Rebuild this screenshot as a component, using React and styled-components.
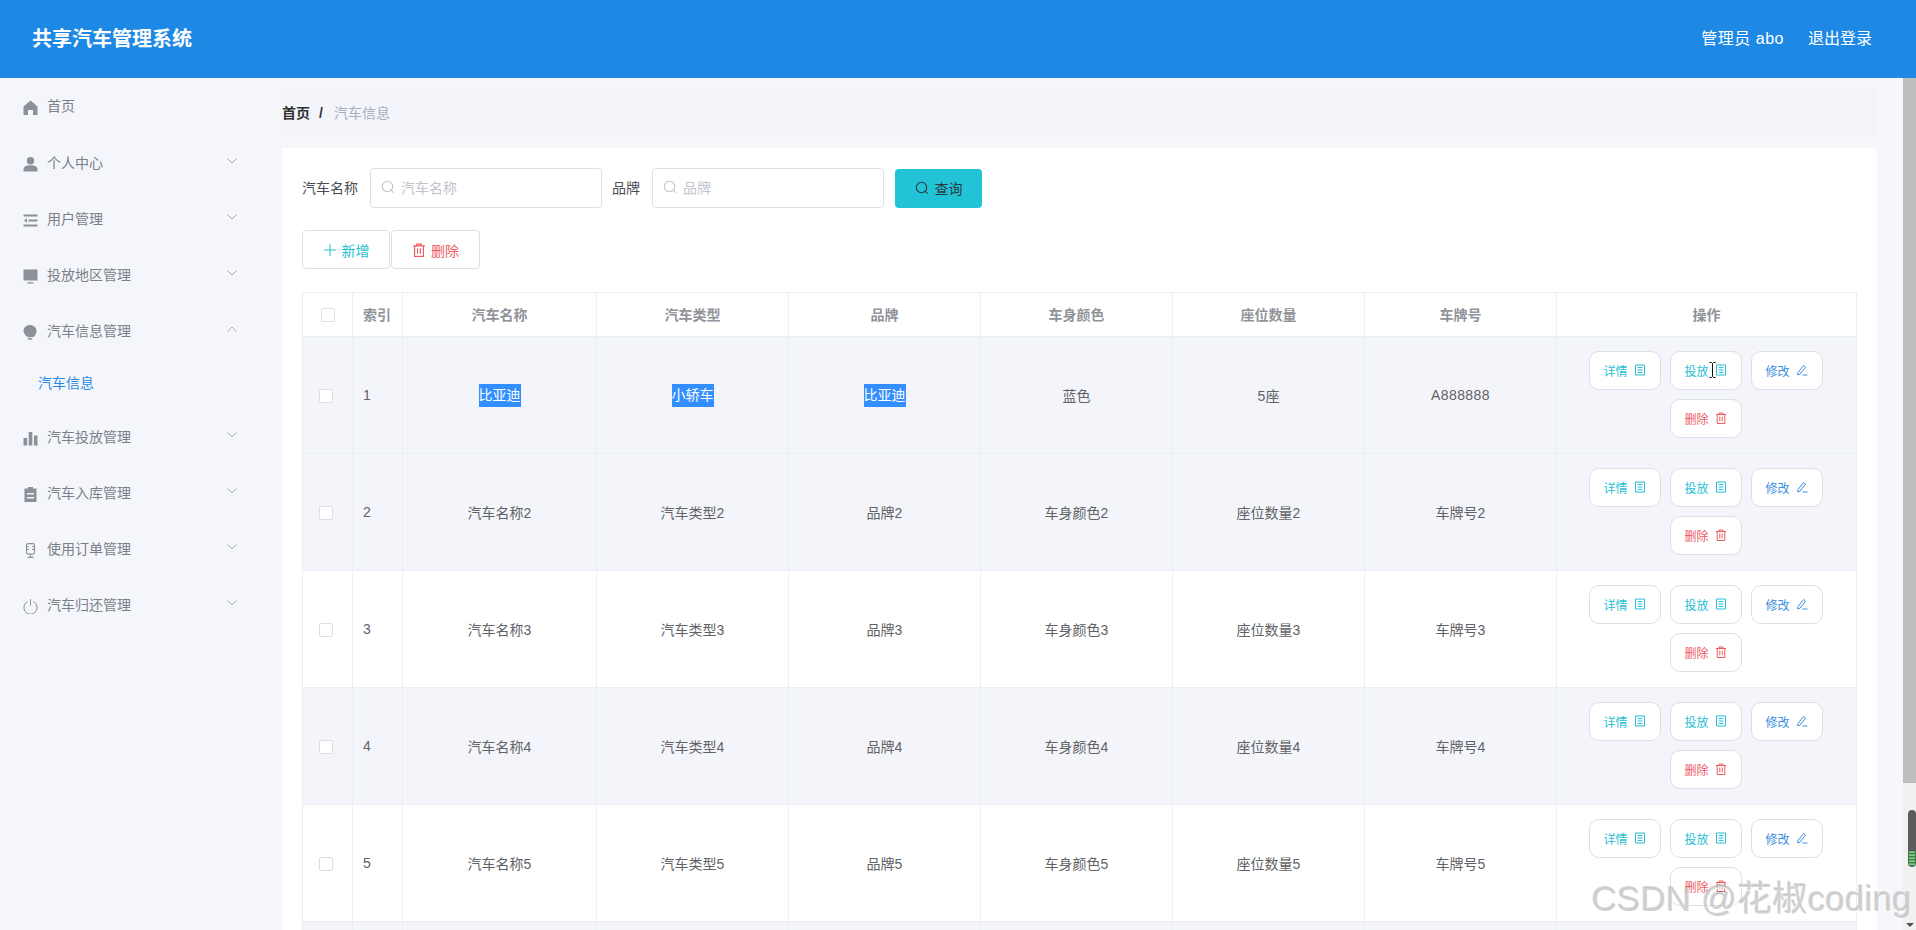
import React from "react";
import styled, { createGlobalStyle } from "styled-components";

const Global = createGlobalStyle`
  html, body { margin: 0; padding: 0; height: 100%; overflow: hidden; }
  body { font-family: "Liberation Sans", "Noto Sans CJK SC", sans-serif; font-size: 14px; color: #606266; }
  * { box-sizing: border-box; }
`;

const Page = styled.div`
  position: relative;
  width: 1916px;
  height: 930px;
  display: flex;
  flex-direction: column;
  overflow: hidden;
  background: #f5f7fb;
`;
const Header = styled.header`
  flex: none;
  height: 78px;
  background: #1e88e5;
  color: #fff;
  display: flex;
  align-items: center;
  justify-content: space-between;
  padding: 0 44px 0 32px;
`;
const Title = styled.div`
  font-size: 20px;
  font-weight: 700;
  line-height: 28px;
`;
const HeaderRight = styled.div`
  display: flex;
  gap: 24px;
  font-size: 16px;
  line-height: 24px;
`;
const AdminName = styled.span`
  letter-spacing: 0.5px;
`;
const Body = styled.div`
  flex: 1;
  min-height: 0;
  display: flex;
`;
const Sidebar = styled.nav`
  flex: none;
  width: 258px;
  background: #f4f6fb;
  color: #7a7f88;
`;
const MenuRow = styled.div`
  height: 56px;
  display: flex;
  align-items: center;
  padding: 0 21px 0 23px;
  margin-top: ${(p) => p.$gap || 0}px;
  line-height: 20px;
`;
const MenuIcon = styled.svg`
  flex: none;
  width: 15px;
  height: 15px;
  margin: 2px 9px 0 0;
  fill: #8b9099;
  stroke: none;
`;
const MenuLabel = styled.span`
  flex: 1;
`;
const Chevron = styled.svg`
  flex: none;
  width: 10px;
  height: 6px;
  margin-top: -5px;
  fill: none;
  stroke: #a9adb5;
  stroke-width: 1;
  transform: ${(p) => (p.$open ? "rotate(180deg)" : "none")};
`;
const SubRow = styled.div`
  height: 50px;
  display: flex;
  align-items: center;
  padding: 0 0 2px 38px;
  color: #2a8be0;
  line-height: 20px;
`;
const Main = styled.main`
  flex: 1;
  min-width: 0;
  overflow: hidden;
  padding: 10px 26px 0 24px;
`;
const Crumbs = styled.div`
  height: 50px;
  background: #f3f5fa;
  display: flex;
  align-items: center;
  gap: 9px;
  line-height: 20px;
`;
const CrumbHome = styled.span`
  color: #303133;
  font-weight: 700;
`;
const CrumbCurrent = styled.span`
  color: #a8adb8;
  margin-left: 2px;
`;
const Card = styled.section`
  margin-top: 10px;
  background: #fff;
  padding: 20px 20px 0;
  height: 800px;
`;
const FilterRow = styled.div`
  display: flex;
  align-items: center;
  height: 40px;
`;
const FieldLabel = styled.label`
  color: #4a4d52;
  margin-right: 12px;
  line-height: 20px;
`;
const SearchBox = styled.div`
  width: 232px;
  height: 40px;
  border: 1px solid #dcdfe6;
  border-radius: 4px;
  background: #fff;
  display: flex;
  align-items: center;
  padding: 0 0 2px 10px;
  gap: 6px;
  color: #c0c4cc;
  margin-right: 10px;
`;
const SearchIcon = styled.svg`
  flex: none;
  width: 14px;
  height: 14px;
  fill: none;
  stroke: currentColor;
  stroke-width: 1.1;
`;
const QueryButton = styled.button`
  width: 87px;
  height: 39px;
  margin-left: 1px;
  border: 0;
  border-radius: 4px;
  background: #22c3d6;
  color: #2c3a40;
  font: inherit;
  display: flex;
  align-items: center;
  justify-content: center;
  gap: 6px;
  padding: 0 0 1px;
`;
const ActionBar = styled.div`
  display: flex;
  gap: 1px;
  margin-top: 22px;
`;
const BarButton = styled.button`
  width: ${(p) => p.$w}px;
  height: 39px;
  border: 1px solid #dcdfe6;
  border-radius: 4px;
  background: #fff;
  color: ${(p) => p.$color};
  font: inherit;
  display: flex;
  align-items: center;
  justify-content: center;
  gap: 5px;
  padding: 0;
`;
const GlyphSvg = styled.svg`
  flex: none;
  width: 14px;
  height: 14px;
  fill: none;
  stroke: currentColor;
  stroke-width: 1;
`;
const Table = styled.table`
  margin-top: 23px;
  width: 1554px;
  table-layout: fixed;
  border-collapse: collapse;
  border: 1px solid #ebeef5;
`;
const Col = styled.col`
  width: ${(p) => p.$w}px;
`;
const Th = styled.th`
  height: 44px;
  padding: 0 10px 2px;
  border: 1px solid #ebeef5;
  color: #909399;
  font-weight: 700;
  font-size: 14px;
  text-align: ${(p) => (p.$left ? "left" : "center")};
  background: #fff;
`;
const Tr = styled.tr`
  background: ${(p) => (p.$stripe ? "#f3f5fa" : "#fff")};
`;
const Td = styled.td`
  height: 117px;
  padding: ${(p) => (p.$tight ? "0 12px 2px 10px" : "0 10px")};
  border: 1px solid #ebeef5;
  text-align: ${(p) => (p.$left ? "left" : "center")};
  color: #606266;
  font-size: 14px;
`;
const Plate = styled.span`
  letter-spacing: 0.4px;
`;
const Check = styled.span`
  display: inline-block;
  width: 14px;
  height: 14px;
  border: 1px solid #dcdfe6;
  border-radius: 2px;
  background: #fff;
  vertical-align: middle;
  margin-left: ${(p) => p.$shift || 0}px;
`;
const Selected = styled.span`
  display: inline-block;
  height: 23px;
  line-height: 23px;
  background: #338fff;
  color: #fff;
`;
const Actions = styled.div`
  display: flex;
  flex-wrap: wrap;
  justify-content: center;
  gap: 9px;
`;
const RowButton = styled.button`
  position: relative;
  width: 72px;
  height: 39px;
  border: 1px solid #dcdfe6;
  border-radius: 10px;
  background: #fff;
  color: ${(p) => p.$color};
  font: inherit;
  font-size: 12px;
  display: flex;
  align-items: center;
  justify-content: center;
  gap: 6px;
  padding: 0;
`;
const RowIcon = styled.svg`
  flex: none;
  width: 12px;
  height: 12px;
  fill: none;
  stroke: currentColor;
  stroke-width: 1;
`;
const Caret = styled.svg`
  position: absolute;
  left: 38px;
  top: 10px;
  width: 7px;
  height: 16px;
  fill: none;
  stroke: #111;
  stroke-width: 1;
`;
const Rail = styled.aside`
  position: relative;
  flex: none;
  width: 13px;
  display: flex;
  flex-direction: column;
  background: #f1f1f1;
`;
const RailThumb = styled.div`
  height: 705px;
  background: #bebebe;
`;
const RailPeek = styled.div`
  position: absolute;
  right: 0;
  top: 732px;
  width: 8px;
  height: 57px;
  border-radius: 4px;
  background: #5c5c5c;
  overflow: hidden;
  &::after {
    content: "";
    position: absolute;
    left: 1px;
    right: 1px;
    bottom: 1px;
    height: 15px;
    background: repeating-linear-gradient(#54b964 0 1px, #7fd08c 1px 2px, #3c7e48 2px 3px);
  }
`;
const RailArrow = styled.div`
  position: absolute;
  right: 2px;
  bottom: 3px;
  width: 0;
  height: 0;
  border-left: 4px solid transparent;
  border-right: 4px solid transparent;
  border-top: 4px solid #505050;
`;
const Watermark = styled.div`
  position: absolute;
  right: 4px;
  bottom: 11px;
  font-family: "Liberation Sans", "Noto Sans CJK SC", sans-serif;
  font-size: 35px;
  line-height: 40px;
  letter-spacing: 0.2px;
  color: rgba(190, 190, 190, 0.7);
  text-shadow: 1px 1px 1px rgba(255, 255, 255, 0.9), -1px -1px 0 rgba(120, 120, 120, 0.25);
  white-space: nowrap;
  pointer-events: none;
`;

const Search = () => (
  <SearchIcon viewBox="0 0 14 14">
    <circle cx="6.5" cy="6.5" r="5.2" />
    <path d="M10.3 10.3 12.6 12.6" />
  </SearchIcon>
);
const Trash = ({ as: C = RowIcon }) => (
  <C viewBox="0 0 12 12">
    <path d="M1 2.5h10M4 2.5V1h4v1.5M2.2 2.5v9h7.6v-9M4.8 4.5v4.8M7.2 4.5v4.8" />
  </C>
);
const Doc = () => (
  <RowIcon viewBox="0 0 12 12">
    <path d="M1.5 1h9v10h-9zM3.6 3.6h4.8M3.6 6h4.8M3.6 8.4h4.8" />
  </RowIcon>
);
const Pen = () => (
  <RowIcon viewBox="0 0 12 12">
    <path d="M2 8.5 7.5 1.5l2 1.6L4 10.2l-2.4.6zM6.5 11h5" />
  </RowIcon>
);
const Down = ({ open }) => (
  <Chevron viewBox="0 0 10 6" $open={open}>
    <path d="M.5.5 5 5 9.5.5" />
  </Chevron>
);

const icons = {
  home: <path d="M7.500 .5 14.500 6.500V15H10V10H5V15H.5V6.500Z" />,
  user: (
    <>
      <circle cx="7.500" cy="3.800" r="3.700" />
      <path d="M.5 12.500c0-2.800 2.600-4.200 7-4.200s7 1.400 7 4.200v2H.5Z" />
    </>
  ),
  list: <path d="M.5 1.500h14v2H.5ZM5.500 6.500h9v2h-9ZM.5 11.500h14v2H.5ZM4 5.300v4.400L1 7.500Z" />,
  screen: <path d="M.5 .5h14v11H.5ZM4.500 13.200h6v1.300h-6Z" />,
  bulb: (
    <>
      <path d="M7 0c3.500 0 6.500 2.500 6.500 6 0 2.700-1.700 5-3.700 6.300H5.200C3.200 11 .5 8.700.5 6 .5 2.500 3.500 0 7 0Z" />
      <path d="M4.800 13.200h4.400v1.500H4.800Z" />
    </>
  ),
  chart: <path d="M.5 7h3.600v7.500H.5ZM5.700 1h3.600v13.500H5.700ZM10.900 4.500h3.600v10h-3.600Z" />,
  clip: (
    <path
      fillRule="evenodd"
      d="M5 0h5v1.500h3.500V15H1.500V1.500H5ZM4 6v1.500h7V6ZM4 10v1.500h7V10Z"
    />
  ),
  mic: (
    <g fill="none" stroke="#8b9099" strokeWidth="1.1">
      <rect x="3.500" y=".6" width="8" height="10.500" rx="1.600" />
      <path d="M3.500 3.800h2.500M3.500 6.500h2.500M9 3.800h2.500M9 6.500h2.500M7.500 11.100V14M4.500 14.400h6" />
    </g>
  ),
  power: (
    <g fill="none" stroke="#8b9099" strokeWidth="1">
      <path d="M4.700 2.600a6.600 6.600 0 1 0 5.600 0M7.500 .2v6.400" />
    </g>
  ),
};

const menuTop = [
  ["home", "首页", false],
  ["user", "个人中心", true],
  ["list", "用户管理", true],
  ["screen", "投放地区管理", true],
];
const menuBottom = [
  ["chart", "汽车投放管理"],
  ["clip", "汽车入库管理"],
  ["mic", "使用订单管理"],
  ["power", "汽车归还管理"],
];

const MenuItem = ({ icon, label, arrow = true, open, gap }) => (
  <MenuRow $gap={gap}>
    <MenuIcon viewBox="0 0 15 15">{icons[icon]}</MenuIcon>
    <MenuLabel>{label}</MenuLabel>
    {arrow && <Down open={open} />}
  </MenuRow>
);

const columns = ["汽车名称", "汽车类型", "品牌", "车身颜色", "座位数量", "车牌号"];
const widths = [50, 50, 194, 192, 192, 192, 192, 192, 300];

const firstRow = [
  <Selected>比亚迪</Selected>,
  <Selected>小轿车</Selected>,
  <Selected>比亚迪</Selected>,
  "蓝色",
  "5座",
  <Plate>A888888</Plate>,
];

const RowActions = ({ caret }) => (
  <Actions>
    <RowButton $color="#26bfd3">详情<Doc /></RowButton>
    <RowButton $color="#26bfd3">
      投放<Doc />
      {caret && (
        <Caret viewBox="0 0 7 16">
          <path d="M.5.5h2l1 1 1-1h2M3.500 1.500v13M.5 15.500h2l1-1 1 1h2" />
        </Caret>
      )}
    </RowButton>
    <RowButton $color="#3d8fe0">修改<Pen /></RowButton>
    <RowButton $color="#ee5a5f">删除<Trash /></RowButton>
  </Actions>
);

const rows = [1, 2, 3, 4, 5, 6];

export default function App() {
  return (
    <Page>
      <Global />
      <Header>
        <Title>共享汽车管理系统</Title>
        <HeaderRight>
          <AdminName>管理员 abo</AdminName>
          <span>退出登录</span>
        </HeaderRight>
      </Header>
      <Body>
        <Sidebar>
          {menuTop.map(([icon, label, arrow], i) => (
            <MenuItem key={label} icon={icon} label={label} arrow={arrow} gap={i === 1 ? 1 : 0} />
          ))}
          <MenuItem icon="bulb" label="汽车信息管理" open />
          <SubRow>汽车信息</SubRow>
          {menuBottom.map(([icon, label]) => (
            <MenuItem key={label} icon={icon} label={label} />
          ))}
        </Sidebar>
        <Main>
          <Crumbs>
            <CrumbHome>首页</CrumbHome>
            <CrumbHome>/</CrumbHome>
            <CrumbCurrent>汽车信息</CrumbCurrent>
          </Crumbs>
          <Card>
            <FilterRow>
              <FieldLabel>汽车名称</FieldLabel>
              <SearchBox><Search />汽车名称</SearchBox>
              <FieldLabel>品牌</FieldLabel>
              <SearchBox><Search />品牌</SearchBox>
              <QueryButton><Search />查询</QueryButton>
            </FilterRow>
            <ActionBar>
              <BarButton $w={88} $color="#26bfd3">
                <GlyphSvg viewBox="0 0 14 14"><path d="M7 1v12M1 7h12" /></GlyphSvg>
                新增
              </BarButton>
              <BarButton $w={89} $color="#ee5a5f"><Trash as={GlyphSvg} />删除</BarButton>
            </ActionBar>
            <Table>
              <colgroup>
                {widths.map((w, i) => <Col key={i} $w={w} />)}
              </colgroup>
              <thead>
                <tr>
                  <Th><Check /></Th>
                  <Th $left>索引</Th>
                  {columns.map((c) => <Th key={c}>{c}</Th>)}
                  <Th>操作</Th>
                </tr>
              </thead>
              <tbody>
                {rows.map((n) => (
                  <Tr key={n} $stripe={n % 2 === 0 || n === 1}>
                    <Td><Check $shift={-3} /></Td>
                    <Td $left>{n}</Td>
                    {columns.map((c, i) => (
                      <Td key={c}>{n === 1 ? firstRow[i] : `${c}${n}`}</Td>
                    ))}
                    <Td $tight><RowActions caret={n === 1} /></Td>
                  </Tr>
                ))}
              </tbody>
            </Table>
          </Card>
        </Main>
        <Rail>
          <RailThumb />
          <RailPeek />
          <RailArrow />
        </Rail>
      </Body>
      <Watermark>CSDN @花椒coding</Watermark>
    </Page>
  );
}
